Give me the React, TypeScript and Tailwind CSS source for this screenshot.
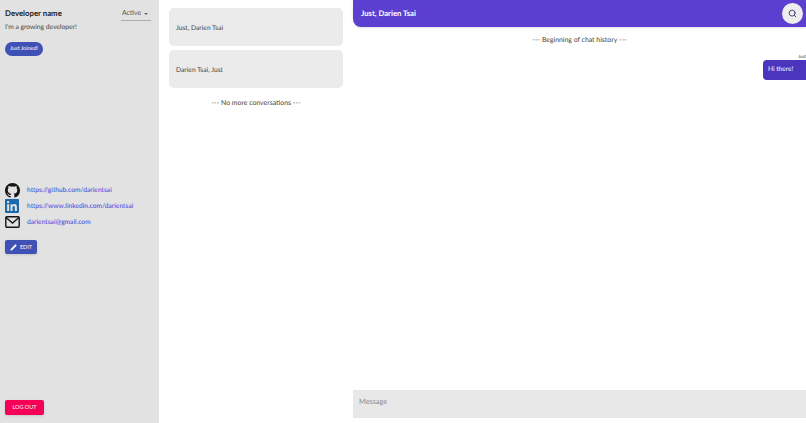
import { Pencil, Search } from "lucide-react";

const font = "font-['Lato',sans-serif] [text-rendering:geometricPrecision]";

function GitHubIcon() {
  return (
    <svg viewBox="0 0 16 16" className="w-[15px] h-[15px] fill-[#161616]">
      <path d="M8 0C3.58 0 0 3.58 0 8c0 3.54 2.29 6.53 5.47 7.59.4.07.55-.17.55-.38 0-.19-.01-.82-.01-1.49-2.01.37-2.53-.49-2.69-.94-.09-.23-.48-.94-.82-1.13-.28-.15-.68-.52-.01-.53.63-.01 1.08.58 1.23.82.72 1.21 1.87.87 2.33.66.07-.52.28-.87.51-1.07-1.78-.2-3.64-.89-3.64-3.95 0-.87.31-1.59.82-2.15-.08-.2-.36-1.02.08-2.12 0 0 .67-.21 2.2.82.64-.18 1.32-.27 2-.27s1.36.09 2 .27c1.53-1.04 2.2-.82 2.2-.82.44 1.1.16 1.92.08 2.12.51.56.82 1.27.82 2.15 0 3.07-1.87 3.75-3.65 3.95.29.25.54.73.54 1.48 0 1.07-.01 1.93-.01 2.2 0 .21.15.46.55.38A8.01 8.01 0 0 0 16 8c0-4.42-3.58-8-8-8z" />
    </svg>
  );
}

function LinkedInIcon() {
  return (
    <svg viewBox="0 0 24 24" className="w-[14px] h-[14px] fill-[#1a68ad]">
      <path d="M22 0H2C.9 0 0 .9 0 2v20c0 1.1.9 2 2 2h20c1.1 0 2-.9 2-2V2c0-1.1-.9-2-2-2zM7.1 20.4H3.6V9h3.5v11.4zM5.3 7.4a2 2 0 1 1 0-4.1 2 2 0 0 1 0 4.1zm15.1 13h-3.5v-5.6c0-1.3 0-3-1.9-3s-2.1 1.4-2.1 2.9v5.7H9.4V9h3.4v1.6c.5-.9 1.6-1.9 3.4-1.9 3.6 0 4.2 2.4 4.2 5.4v6.3z" />
    </svg>
  );
}

function MailIcon() {
  return (
    <svg viewBox="0 0 15 12" className="w-[15px] h-[12px] fill-none stroke-[#161616] stroke-[1.4]">
      <rect x="0.8" y="0.8" width="13.4" height="10.4" rx="1" />
      <path d="M1 1.5 7.5 7 14 1.5" />
    </svg>
  );
}

function LinkRow({ icon, text }: { icon: React.ReactNode; text: string }) {
  return (
    <div className="flex items-center h-4">
      <div className="w-[22px] shrink-0 flex justify-start">{icon}</div>
      <span className="text-[6.7px] text-[#3f3fe0] whitespace-nowrap">{text}</span>
    </div>
  );
}

function Conversation({ text }: { text: string }) {
  return (
    <div className="h-[38px] rounded-[5px] bg-[#ebebeb] flex items-center px-[7px] pt-[3px] text-[6.7px] text-[#444]">
      {text}
    </div>
  );
}

export default function App() {
  return (
    <div className={`${font} flex w-[806px] h-[423px] overflow-hidden bg-white`}>
      <aside className="w-[159px] shrink-0 bg-[#e2e2e2] flex flex-col pl-[5px] pr-2">
        <div className="flex items-start justify-between pt-[7px]">
          <span className="text-[7.8px] leading-[12px] font-bold text-[#222]">Developer name</span>
          <div className="w-[30px] h-[14px] border-b border-[#aaa] flex items-center justify-between pl-[1px] text-[6.9px] text-[#555]">
            <span>Active</span>
            <span className="mr-[3px] w-0 h-0 border-x-[2px] border-x-transparent border-t-[2px] border-t-[#666]" />
          </div>
        </div>
        <p className="text-[6.7px] leading-[10px] mt-[1px] text-[#444]">I'm a growing developer!</p>
        <div className="mt-[10px] w-[38px] h-[14px] rounded-full bg-[#3f51b5] text-white text-[5.5px] flex items-center justify-center">
          Just Joined!
        </div>
        <div className="mt-[126px] flex flex-col gap-0">
          <LinkRow icon={<GitHubIcon />} text="https://github.com/darientsai" />
          <LinkRow icon={<LinkedInIcon />} text="https://www.linkedin.com/darientsai" />
          <LinkRow icon={<MailIcon />} text="darientsai@gmail.com" />
        </div>
        <button className="mt-[10px] w-[32px] h-[14px] rounded-[2px] bg-[#3f51b5] text-white text-[5.5px] flex items-center justify-center gap-[3px] shadow-sm">
          <Pencil size={7} fill="white" strokeWidth={1} />
          EDIT
        </button>
        <button className="mt-auto mb-2 w-[39px] h-[15px] rounded-[2px] bg-[#f50057] text-white text-[5.5px] flex items-center justify-center shadow-sm">
          LOG OUT
        </button>
      </aside>

      <section className="w-[194px] shrink-0 px-[10px] pt-2 flex flex-col gap-1">
        <Conversation text="Just, Darien Tsai" />
        <Conversation text="Darien Tsai, Just" />
        <p className="text-center text-[6.9px] text-[#444] mt-[6px]">--- No more conversations ---</p>
      </section>

      <main className="flex-1 flex flex-col min-w-0">
        <header className="h-[27px] bg-[#5a3fd0] rounded-bl-[8px] flex items-center justify-between pl-2 pr-[3px] shadow-sm">
          <span className="text-[7.7px] font-bold text-white">Just, Darien Tsai</span>
          <span className="w-[21px] h-[21px] rounded-full bg-[#ededed] flex items-center justify-center">
            <Search size={9} className="text-[#3f3f7a]" strokeWidth={2.5} />
          </span>
        </header>
        <p className="text-center text-[6.9px] text-[#444] mt-2">--- Beginning of chat history ---</p>
        <div className="flex flex-col items-end mt-[9px]">
          <span className="text-[4.5px] text-[#333] leading-[6px]">Just</span>
          <div className="w-[43px] h-5 rounded-l-[4px] bg-[#4c35bd] text-white text-[6.6px] flex items-center pl-[5px]">
            Hi there!
          </div>
        </div>
        <div className="mt-auto mb-[5px] h-7 bg-[#e8e8e8] flex items-center pl-[6px] pb-[3px] text-[7.3px] text-[#888]">
          Message
        </div>
      </main>
    </div>
  );
}
